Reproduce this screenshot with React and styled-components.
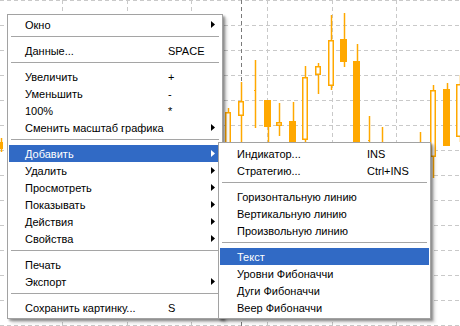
import React from 'react';
import styled, { createGlobalStyle } from 'styled-components';

const GlobalStyle = createGlobalStyle`
  html, body {
    margin: 0;
    padding: 0;
    background: #ffffff;
  }
  body {
    font-family: "Liberation Sans", Arial, sans-serif;
    font-size: 11px;
  }
`;

const Screen = styled.div`
  position: relative;
  width: 460px;
  height: 326px;
  overflow: hidden;
  background: #ffffff;
`;

const ChartCanvas = styled.svg`
  position: absolute;
  left: 0;
  top: 0;
  display: block;
`;

const Menu = styled.div`
  position: absolute;
  left: ${(p) => p.$left}px;
  top: ${(p) => p.$top}px;
  width: ${(p) => p.$width}px;
  box-sizing: border-box;
  padding: ${(p) => p.$padTop}px 1px 2px;
  background: #ffffff;
  border: 1px solid #a2a2a2;
  box-shadow: 2px 2px 2px rgba(0, 0, 0, 0.35), 4px 4px 3px rgba(0, 0, 0, 0.15);
  color: #000000;
  font-family: "Liberation Sans", Arial, sans-serif;
  font-size: 11px;
`;

const Item = styled.div`
  display: flex;
  align-items: center;
  height: 17px;
  padding-left: ${(p) => p.$indent}px;
  background: ${(p) => (p.$active ? '#316ac5' : 'transparent')};
  color: ${(p) => (p.$active ? '#ffffff' : '#000000')};
  white-space: nowrap;
`;

const Label = styled.span`
  flex: 0 0 ${(p) => p.$width}px;
`;

const Shortcut = styled.span`
  flex: 1;
`;

const Arrow = styled.svg`
  flex: 0 0 4px;
  margin-right: 6px;
`;

const Separator = styled.div`
  height: 9px;
  display: flex;
  align-items: flex-start;
  padding: 0 2px;
  &::after {
    content: '';
    display: block;
    flex: 1;
    margin-top: 3px;
    height: 1px;
    background: #a5a5a5;
  }
`;

const mainItems = [
  { label: 'Окно', sub: true },
  'sep',
  { label: 'Данные...', key: 'SPACE' },
  'sep',
  { label: 'Увеличить', key: '+' },
  { label: 'Уменьшить', key: '-' },
  { label: '100%', key: '*' },
  { label: 'Сменить масштаб графика', sub: true },
  'sep',
  { label: 'Добавить', sub: true, active: true },
  { label: 'Удалить', sub: true },
  { label: 'Просмотреть', sub: true },
  { label: 'Показывать', sub: true },
  { label: 'Действия', sub: true },
  { label: 'Свойства', sub: true },
  'sep',
  { label: 'Печать' },
  { label: 'Экспорт', sub: true },
  'sep',
  { label: 'Сохранить картинку...', key: 'S' },
];

const addItems = [
  { label: 'Индикатор...', key: 'INS' },
  { label: 'Стратегию...', key: 'Ctrl+INS' },
  'sep',
  { label: 'Горизонтальную линию' },
  { label: 'Вертикальную линию' },
  { label: 'Произвольную линию' },
  'sep',
  { label: 'Текст', active: true },
  { label: 'Уровни Фибоначчи' },
  { label: 'Дуги Фибоначчи' },
  { label: 'Веер Фибоначчи' },
];

// x0, x1 body edges; bt/bb body top/bottom; wt/wb wick; f = filled
const candles = [
  { x0: 225, x1: 231, bt: 112, bb: 160, wt: 108, wb: 160 },
  { x0: 238, x1: 244, bt: 101, bb: 116, wt: 82, wb: 145 },
  { x0: 254, x1: 255, bt: 90, bb: 91, wt: 60, wb: 128, f: true },
  { x0: 264, x1: 271, bt: 100, bb: 127, wt: 100, wb: 145, f: true },
  { x0: 276, x1: 282, bt: 122, bb: 126, wt: 103, wb: 136 },
  { x0: 289, x1: 296, bt: 121, bb: 150, wt: 102, wb: 150, f: true },
  { x0: 302, x1: 308, bt: 77, bb: 140, wt: 66, wb: 142 },
  { x0: 315, x1: 321, bt: 66, bb: 75, wt: 63, wb: 94 },
  { x0: 328, x1: 334, bt: 40, bb: 86, wt: 15, wb: 90 },
  { x0: 340, x1: 347, bt: 39, bb: 62, wt: 13, wb: 67, f: true },
  { x0: 353, x1: 360, bt: 61, bb: 150, wt: 44, wb: 150, f: true },
  { x0: 368, x1: 369, bt: 140, bb: 141, wt: 116, wb: 150, f: true },
  { x0: 381, x1: 382, bt: 145, bb: 146, wt: 127, wb: 150, f: true },
  { x0: 419, x1: 420, bt: 145, bb: 146, wt: 132, wb: 150, f: true },
  { x0: 430, x1: 436, bt: 90, bb: 157, wt: 85, wb: 178 },
  { x0: 443, x1: 450, bt: 89, bb: 146, wt: 83, wb: 146, f: true },
  { x0: 456, x1: 464, bt: 84, bb: 137, wt: 75, wb: 142 },
  { x0: -2, x1: 3, bt: 142, bb: 149, wt: 138, wb: 152, f: true },
];

const ORANGE = '#ffa800';

function Chart() {
  const rows = [];
  for (let y = 0; y <= 325; y += 25) rows.push(y);
  const cols = [62, 127, 191, 267, 332, 396];
  return (
    <ChartCanvas width="460" height="326" viewBox="0 0 460 326">
      {rows.map((y) => (
        <line key={`h${y}`} x1="0" x2="460" y1={y + 0.5} y2={y + 0.5} stroke="#c9c9c9" strokeDasharray="4 3" />
      ))}
      {cols.map((x) => (
        <line key={`v${x}`} x1={x + 0.5} x2={x + 0.5} y1="0" y2="326" stroke="#c9c9c9" strokeDasharray="4 3" />
      ))}
      <line x1="241.5" x2="241.5" y1="0" y2="326" stroke="#7a7a7a" strokeDasharray="4 3" />
      {candles.map((c, i) => {
        const mid = Math.round((c.x0 + c.x1) / 2) + 0.5;
        return (
          <g key={i}>
            <line x1={mid} x2={mid} y1={c.wt} y2={c.wb} stroke={ORANGE} strokeWidth="1.5" />
            {c.f ? (
              <rect x={c.x0} y={c.bt} width={c.x1 - c.x0} height={c.bb - c.bt} fill={ORANGE} />
            ) : (
              <rect
                x={c.x0 + 0.75}
                y={c.bt + 0.75}
                width={c.x1 - c.x0 - 1.5}
                height={c.bb - c.bt - 1.5}
                fill="#ffffff"
                stroke={ORANGE}
                strokeWidth="1.5"
              />
            )}
          </g>
        );
      })}
    </ChartCanvas>
  );
}

function MenuList({ items, indent, labelWidth }) {
  return items.map((it, i) =>
    it === 'sep' ? (
      <Separator key={i} />
    ) : (
      <Item key={i} $active={it.active} $indent={indent}>
        <Label $width={labelWidth}>{it.label}</Label>
        <Shortcut>{it.key}</Shortcut>
        {it.sub && (
          <Arrow width="4" height="7" viewBox="0 0 4 7">
            <polygon points="0,0 4,3.5 0,7" fill={it.active ? '#ffffff' : '#000000'} />
          </Arrow>
        )}
      </Item>
    )
  );
}

export default function App() {
  return (
    <Screen>
      <GlobalStyle />
      <Chart />
      <Menu $left={7} $top={14} $width={216} $padTop={1}>
        <MenuList items={mainItems} indent={16} labelWidth={143} />
      </Menu>
      <Menu $left={218} $top={142} $width={213} $padTop={2}>
        <MenuList items={addItems} indent={17} labelWidth={130} />
      </Menu>
    </Screen>
  );
}
